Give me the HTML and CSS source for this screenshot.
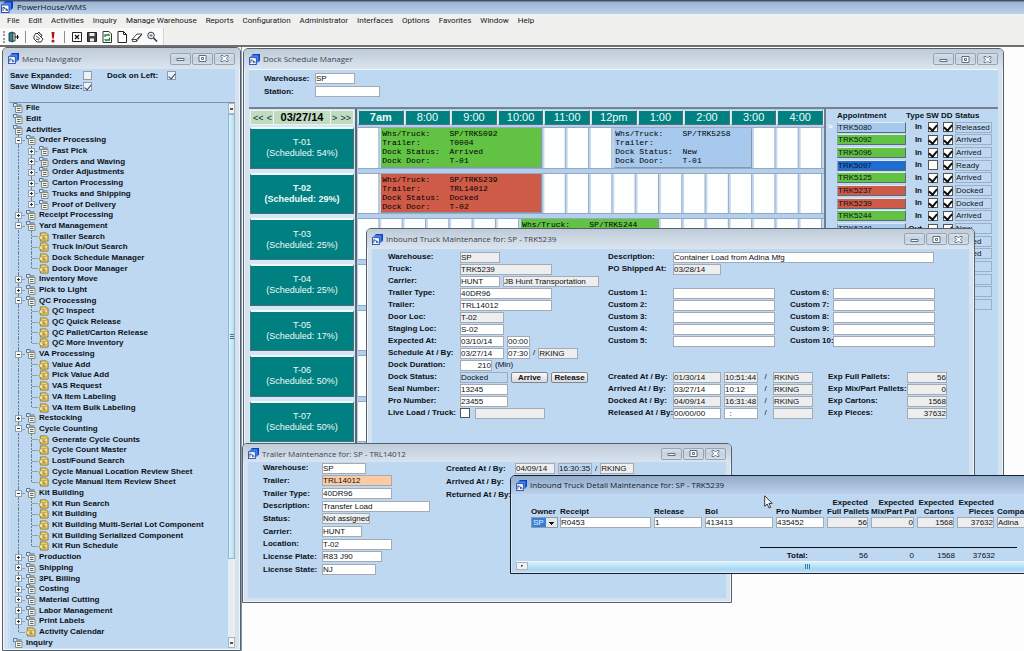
FILE: index.html
```html
<!DOCTYPE html>
<html lang="en">
<head>
<meta charset="utf-8">
<title>PowerHouse/WMS</title>
<link rel="stylesheet" href="styles.css">
</head>
<body>
<svg class="defs" aria-hidden="true">
  <symbol id="logo" viewBox="0 0 12 12"><path d="M4 0h8v7l-2 2V2H3z" fill="#0b3fc4"/><path d="M2.500 1.500h7.500v8H8V3.500H1z" fill="#3f83ee"/><path d="M0 3.500h8.500V12H0z" fill="#2450b8"/><path d="M1 4.500h6.500V11H1z" fill="#fff"/><path d="M2 6v4M2 6.500h1.500v1.500M5 7v3M5 8.500h1.500V10" stroke="#142a80" stroke-width=".8" fill="none"/></symbol>
  <symbol id="doc" viewBox="0 0 10 10"><path d="M.5.5h3.500v3H.5z" fill="#dcebfb" stroke="#56779b"/><path d="M2.500 3.500H9v6H2.500z" fill="#f6f4e6" stroke="#8a8a7c"/><path d="M4.500 2h4M4 5.500h3.500M4 7.500h3.500" stroke="#5c6a78"/></symbol>
  <symbol id="leaf" viewBox="0 0 11 10"><path d="M1.500.5H8l2 2v7H1.500z" fill="#f0d878" stroke="#8c7434"/><path d="M.5 4.500 3 3l3 .5 3.500-1V6L7 8H3L.5 7z" fill="#fbeaa0" stroke="#a88a32" stroke-width=".8"/><path d="M3 5h4M4 6.500h3" stroke="#6f5a1e" stroke-width=".8"/></symbol>
  <symbol id="min" viewBox="0 0 9 7"><path d="M1 3.500h7v2H1z" fill="#fff" stroke="#5f6b78"/></symbol>
  <symbol id="max" viewBox="0 0 9 7"><path d="M1 .5h7v6H1z" fill="#fff" stroke="#5f6b78"/><path d="M3.500 2.500h2v2h-2z" fill="#fff" stroke="#5f6b78"/></symbol>
  <symbol id="close" viewBox="0 0 9 7"><path d="M1 .5h2l1.500 1.500L6 .5h2v1L6.500 3.500 8 5.500v1H6L4.500 5 3 6.500H1v-1l1.500-2L1 1.500z" fill="#fff" stroke="#5f6b78" stroke-width=".9"/></symbol>
</svg>

<header class="app-title"><svg><use href="#logo"/></svg><h1>PowerHouse/WMS</h1></header>
<nav class="menubar">
  <a href="#">File</a><a href="#">Edit</a><a href="#">Activities</a><a href="#">Inquiry</a><a href="#">Manage Warehouse</a><a href="#">Reports</a><a href="#">Configuration</a><a href="#">Administrator</a><a href="#">Interfaces</a><a href="#">Options</a><a href="#">Favorites</a><a href="#">Window</a><a href="#">Help</a>
</nav>
<div class="toolbar"><div class="tools">
  <i class="grip"></i>
  <button aria-label="Exit"><svg viewBox="0 0 12 12"><path d="M1 2l4-1v10l-4-1z" fill="#2b8a86" stroke="#123" stroke-width=".8"/><path d="M5 2h2v8H5" fill="none" stroke="#333"/><path d="M7 6h4M9.500 4v4" stroke="#111"/></svg></button>
  <i class="sep"></i>
  <button aria-label="Pick"><svg viewBox="0 0 12 12"><path d="M2 5l2-3 1 1 2-2 1 2 2 1-1 2 2 2-2 3H5L2 8z" fill="#fff" stroke="#222" stroke-width=".9"/><path d="M4 5l4 3M6 3l3 3M4 8l3 1" stroke="#222" stroke-width=".8"/></svg></button>
  <button aria-label="Alert"><svg viewBox="0 0 12 12"><path d="M4.500 1h3L6.800 7.500H5.200z" fill="#b0121c"/><circle cx="6" cy="10" r="1.500" fill="#b0121c"/></svg></button>
  <i class="sep"></i>
  <button aria-label="Clear"><svg viewBox="0 0 12 12"><path d="M1.500 1.500h9v9h-9z" fill="#fff" stroke="#222"/><path d="M4 4l4 4M8 4L4 8" stroke="#111" stroke-width="1.200"/></svg></button>
  <button aria-label="Save"><svg viewBox="0 0 12 12"><path d="M1.500 1.500h9v9h-9z" fill="#444" stroke="#222"/><path d="M3.500 2h5v3h-5zM4 7.500h4v3H4z" fill="#eee"/></svg></button>
  <button aria-label="Refresh"><svg viewBox="0 0 12 12"><path d="M2 .5h6l2.500 2.500v8.500H2z" fill="#fff" stroke="#333"/><path d="M4 6V4h4L7 3M8.500 6.500V9H4.500l1 1" fill="none" stroke="#1c8a2c" stroke-width="1.300"/></svg></button>
  <button aria-label="New"><svg viewBox="0 0 12 12"><path d="M2 .5h5.500l3 3v8H2z" fill="#fff" stroke="#222"/><path d="M7.500.5v3h3" fill="none" stroke="#222"/></svg></button>
  <button aria-label="Erase"><svg viewBox="0 0 12 12"><path d="M1 8.500 6 3h5L7 8.500 5.500 10.500H1.500z" fill="#fff" stroke="#333" stroke-width=".9"/><path d="M1 8.500h4.500L11 3M5.500 8.500v2" fill="none" stroke="#333" stroke-width=".9"/></svg></button>
  <button aria-label="Find"><svg viewBox="0 0 12 12"><circle cx="5" cy="4.500" r="3.300" fill="#e6eef5" stroke="#444"/><path d="M3.500 4.500h3M5 3v3" stroke="#666" stroke-width=".8"/><path d="M7.500 7l3.500 3.500" stroke="#333" stroke-width="1.600"/></svg></button>
</div></div>

<main class="workspace">
<aside class="win navigator">
  <div class="bar"><svg><use href="#logo"/></svg><h2>Menu Navigator</h2><button aria-label="Minimize"><svg><use href="#min"/></svg></button><button aria-label="Maximize"><svg><use href="#max"/></svg></button><button aria-label="Close"><svg><use href="#close"/></svg></button></div>
  <div class="pane nav-pane">
    <div class="options">
      <label class="opt"><b>Save Expanded:</b><input type="checkbox"></label><label class="opt opt-b"><b>Dock on Left:</b><input type="checkbox" checked></label>
      <label class="opt"><b>Save Window Size:</b><input type="checkbox" checked></label>
    </div>
    <div class="tree-box">
    <ul class="tree">
      <li><svg><use href="#doc"/></svg>File</li>
      <li><svg><use href="#doc"/></svg>Edit</li>
      <li><svg><use href="#doc"/></svg>Activities</li>
      <li class="one"><button class="minus" aria-label="Collapse"></button><svg><use href="#doc"/></svg>Order Processing</li>
      <li class="two"><button aria-label="Expand"></button><svg><use href="#doc"/></svg>Fast Pick</li>
      <li class="two"><button aria-label="Expand"></button><svg><use href="#doc"/></svg>Orders and Waving</li>
      <li class="two"><button aria-label="Expand"></button><svg><use href="#doc"/></svg>Order Adjustments</li>
      <li class="two"><button aria-label="Expand"></button><svg><use href="#doc"/></svg>Carton Processing</li>
      <li class="two"><button aria-label="Expand"></button><svg><use href="#doc"/></svg>Trucks and Shipping</li>
      <li class="two last"><button aria-label="Expand"></button><svg><use href="#doc"/></svg>Proof of Delivery</li>
      <li class="one"><button aria-label="Expand"></button><svg><use href="#doc"/></svg>Receipt Processing</li>
      <li class="one"><button class="minus" aria-label="Collapse"></button><svg><use href="#doc"/></svg>Yard Management</li>
      <li class="two"><svg><use href="#leaf"/></svg>Trailer Search</li>
      <li class="two"><svg><use href="#leaf"/></svg>Truck In/Out Search</li>
      <li class="two"><svg><use href="#leaf"/></svg>Dock Schedule Manager</li>
      <li class="two last"><svg><use href="#leaf"/></svg>Dock Door Manager</li>
      <li class="one"><button aria-label="Expand"></button><svg><use href="#doc"/></svg>Inventory Move</li>
      <li class="one"><button aria-label="Expand"></button><svg><use href="#doc"/></svg>Pick to Light</li>
      <li class="one"><button class="minus" aria-label="Collapse"></button><svg><use href="#doc"/></svg>QC Processing</li>
      <li class="two"><svg><use href="#leaf"/></svg>QC Inspect</li>
      <li class="two"><svg><use href="#leaf"/></svg>QC Quick Release</li>
      <li class="two"><svg><use href="#leaf"/></svg>QC Pallet/Carton Release</li>
      <li class="two last"><svg><use href="#leaf"/></svg>QC More Inventory</li>
      <li class="one"><button class="minus" aria-label="Collapse"></button><svg><use href="#doc"/></svg>VA Processing</li>
      <li class="two"><svg><use href="#leaf"/></svg>Value Add</li>
      <li class="two"><svg><use href="#leaf"/></svg>Pick Value Add</li>
      <li class="two"><svg><use href="#leaf"/></svg>VAS Request</li>
      <li class="two"><svg><use href="#leaf"/></svg>VA Item Labeling</li>
      <li class="two last"><svg><use href="#leaf"/></svg>VA Item Bulk Labeling</li>
      <li class="one"><button aria-label="Expand"></button><svg><use href="#doc"/></svg>Restocking</li>
      <li class="one"><button class="minus" aria-label="Collapse"></button><svg><use href="#doc"/></svg>Cycle Counting</li>
      <li class="two"><svg><use href="#leaf"/></svg>Generate Cycle Counts</li>
      <li class="two"><svg><use href="#leaf"/></svg>Cycle Count Master</li>
      <li class="two"><svg><use href="#leaf"/></svg>Lost/Found Search</li>
      <li class="two"><svg><use href="#leaf"/></svg>Cycle Manual Location Review Sheet</li>
      <li class="two last"><svg><use href="#leaf"/></svg>Cycle Manual Item Review Sheet</li>
      <li class="one"><button class="minus" aria-label="Collapse"></button><svg><use href="#doc"/></svg>Kit Building</li>
      <li class="two"><svg><use href="#leaf"/></svg>Kit Run Search</li>
      <li class="two"><svg><use href="#leaf"/></svg>Kit Building</li>
      <li class="two"><svg><use href="#leaf"/></svg>Kit Building Multi-Serial Lot Component</li>
      <li class="two"><svg><use href="#leaf"/></svg>Kit Building Serialized Component</li>
      <li class="two last"><svg><use href="#leaf"/></svg>Kit Run Schedule</li>
      <li class="one"><button aria-label="Expand"></button><svg><use href="#doc"/></svg>Production</li>
      <li class="one"><button aria-label="Expand"></button><svg><use href="#doc"/></svg>Shipping</li>
      <li class="one"><button aria-label="Expand"></button><svg><use href="#doc"/></svg>3PL Billing</li>
      <li class="one"><button aria-label="Expand"></button><svg><use href="#doc"/></svg>Costing</li>
      <li class="one"><button aria-label="Expand"></button><svg><use href="#doc"/></svg>Material Cutting</li>
      <li class="one"><button aria-label="Expand"></button><svg><use href="#doc"/></svg>Labor Management</li>
      <li class="one"><button aria-label="Expand"></button><svg><use href="#doc"/></svg>Print Labels</li>
      <li class="one last"><svg><use href="#leaf"/></svg>Activity Calendar</li>
      <li><svg><use href="#doc"/></svg>Inquiry</li>
    </ul>
    <div class="vscroll"><button aria-label="Scroll up"></button><i class="thumb"></i><button class="down" aria-label="Scroll down"></button></div>
    </div>
  </div>
</aside>

<div class="desktop">
<section class="win dock">
  <div class="bar"><svg><use href="#logo"/></svg><h2>Dock Schedule Manager</h2><button aria-label="Minimize"><svg><use href="#min"/></svg></button><button aria-label="Maximize"><svg><use href="#max"/></svg></button><button aria-label="Close"><svg><use href="#close"/></svg></button></div>
  <div class="pane dock-pane">
    <div class="filters">
      <label class="fld"><b>Warehouse:</b><input class="w40" value="SP"></label>
      <label class="fld"><b>Station:</b><input class="w65"></label>
    </div>
    <div class="board">
      <div class="doors">
        <div class="datebar"><button>&lt;&lt;</button><button>&lt;</button><strong>03/27/14</strong><button>&gt;</button><button>&gt;&gt;</button></div>
        <div class="lanes">
          <div class="door">T-01<br>(Scheduled: 54%)</div>
          <div class="door picked">T-02<br>(Scheduled: 29%)</div>
          <div class="door">T-03<br>(Scheduled: 25%)</div>
          <div class="door">T-04<br>(Scheduled: 25%)</div>
          <div class="door">T-05<br>(Scheduled: 17%)</div>
          <div class="door">T-06<br>(Scheduled: 50%)</div>
          <div class="door">T-07<br>(Scheduled: 50%)</div>
          <div class="door"></div>
        </div>
      </div>
      <div class="times">
        <div class="hours"><strong>7am</strong><span>8:00</span><span>9:00</span><span>10:00</span><span>11:00</span><span>12pm</span><span>1:00</span><span>2:00</span><span>3:00</span><span>4:00</span></div>
        <div class="lanes">
          <div class="lane"><pre class="green" style="grid-column:2/span 7">Whs/Truck:    SP/TRK5092
Trailer:      T0004
Dock Status:  Arrived
Dock Door:    T-01</pre><pre class="new" style="grid-column:12/span 6">Whs/Truck:    SP/TRK5258
Trailer:
Dock Status:  New
Dock Door:    T-01</pre></div>
          <div class="lane"><pre class="red" style="grid-column:2/span 7">Whs/Truck:    SP/TRK5239
Trailer:      TRL14012
Dock Status:  Docked
Dock Door:    T-02</pre></div>
          <div class="lane"><pre class="green" style="grid-column:8/span 6">Whs/Truck:    SP/TRK5244</pre></div>
          <div class="lane"></div><div class="lane"></div><div class="lane"></div><div class="lane"></div><div class="lane"></div>
        </div>
      </div>
      <div class="appts">
        <table>
          <thead><tr><th class="mark"></th><th class="trk">Appointment</th><th class="ty">Type</th><th class="ck">SW</th><th class="ck">DD</th><th class="st">Status</th></tr></thead>
          <tbody>
            <tr><td class="cur">&gt;</td><td><span class="tag new">TRK5080</span></td><td>In</td><td><input type="checkbox" aria-label="SW" checked></td><td><input type="checkbox" aria-label="DD" checked></td><td><span class="stat">Released</span></td></tr>
            <tr><td></td><td><span class="tag green">TRK5092</span></td><td>In</td><td><input type="checkbox" aria-label="SW" checked></td><td><input type="checkbox" aria-label="DD" checked></td><td><span class="stat">Arrived</span></td></tr>
            <tr><td></td><td><span class="tag green">TRK5096</span></td><td>In</td><td><input type="checkbox" aria-label="SW" checked></td><td><input type="checkbox" aria-label="DD" checked></td><td><span class="stat">Arrived</span></td></tr>
            <tr><td></td><td><span class="tag blue">TRK5097</span></td><td>In</td><td><input type="checkbox" aria-label="SW"></td><td><input type="checkbox" aria-label="DD" checked></td><td><span class="stat">Ready</span></td></tr>
            <tr><td></td><td><span class="tag green">TRK5125</span></td><td>In</td><td><input type="checkbox" aria-label="SW" checked></td><td><input type="checkbox" aria-label="DD" checked></td><td><span class="stat">Arrived</span></td></tr>
            <tr><td></td><td><span class="tag red">TRK5237</span></td><td>In</td><td><input type="checkbox" aria-label="SW" checked></td><td><input type="checkbox" aria-label="DD" checked></td><td><span class="stat">Docked</span></td></tr>
            <tr><td></td><td><span class="tag red">TRK5239</span></td><td>In</td><td><input type="checkbox" aria-label="SW" checked></td><td><input type="checkbox" aria-label="DD" checked></td><td><span class="stat">Docked</span></td></tr>
            <tr><td></td><td><span class="tag green">TRK5244</span></td><td>In</td><td><input type="checkbox" aria-label="SW" checked></td><td><input type="checkbox" aria-label="DD" checked></td><td><span class="stat">Arrived</span></td></tr>
            <tr><td></td><td><span class="tag new">TRK5248</span></td><td>Out</td><td><input type="checkbox" aria-label="SW"></td><td><input type="checkbox" aria-label="DD" checked></td><td><span class="stat">New</span></td></tr>
            <tr><td></td><td></td><td></td><td></td><td></td><td><span class="stat">Arrived</span></td></tr>
            <tr><td></td><td></td><td></td><td></td><td></td><td><span class="stat">Arrived</span></td></tr>
            <tr><td></td><td></td><td></td><td></td><td></td><td><span class="stat"></span></td></tr>
            <tr><td></td><td></td><td></td><td></td><td></td><td><span class="stat"></span></td></tr>
            <tr><td></td><td></td><td></td><td></td><td></td><td><span class="stat"></span></td></tr>
            <tr><td></td><td></td><td></td><td></td><td></td><td><span class="stat"></span></td></tr>
          </tbody>
        </table>
      </div>
    </div>
  </div>
</section>

<section class="win truck">
  <div class="bar"><svg><use href="#logo"/></svg><h2>Inbound Truck Maintenance for: SP - TRK5239</h2><button aria-label="Minimize"><svg><use href="#min"/></svg></button><button aria-label="Maximize"><svg><use href="#max"/></svg></button><button aria-label="Close"><svg><use href="#close"/></svg></button></div>
  <form class="pane truck-pane">
    <div class="col-a">
      <div class="row"><label class="fld"><b>Warehouse:</b><input class="w40 ro" value="SP"></label></div>
      <div class="row"><label class="fld"><b>Truck:</b><input class="w92 ro" value="TRK5239"></label></div>
      <div class="row"><label class="fld"><b>Carrier:</b><input class="w40" value="HUNT"></label><input class="w96 ro" aria-label="Carrier name" value="JB Hunt Transportation"></div>
      <div class="row"><label class="fld"><b>Trailer Type:</b><input class="w92" value="40DR96"></label></div>
      <div class="row"><label class="fld"><b>Trailer:</b><input class="w92" value="TRL14012"></label></div>
      <div class="row"><label class="fld"><b>Door Loc:</b><input class="w44 ro" value="T-02"></label></div>
      <div class="row"><label class="fld"><b>Staging Loc:</b><input class="w44" value="S-02"></label></div>
      <div class="row"><label class="fld"><b>Expected At:</b><input class="w44" value="03/10/14"></label><input class="w23" aria-label="Expected time" value="00:00"></div>
      <div class="row"><label class="fld"><b>Schedule At / By:</b><input class="w44" value="03/27/14"></label><input class="w23" aria-label="Schedule time" value="07:30"><span>/</span><input class="w40 ro" aria-label="Scheduled by" value="RKING"></div>
      <div class="row"><label class="fld"><b>Dock Duration:</b><input class="w32 num" value="210"></label><span>(Min)</span></div>
      <div class="row"><label class="fld"><b>Dock Status:</b><input class="w48 flat" value="Docked"></label><button type="button" class="push">Arrive</button><button type="button" class="push">Release</button></div>
      <div class="row"><label class="fld"><b>Seal Number:</b><input class="w48" value="13245"></label></div>
      <div class="row"><label class="fld"><b>Pro Number:</b><input class="w48" value="23455"></label></div>
      <div class="row live"><label class="fld"><b>Live Load / Truck:</b><input type="checkbox"></label><input class="w70 ro" aria-label="Live load truck"></div>
    </div>
    <div class="col-b">
      <div class="row"><label class="fld"><b>Description:</b><input class="w261" value="Container Load from Adina Mfg"></label></div>
      <div class="row"><label class="fld"><b>PO Shipped At:</b><input class="w48 ro" value="03/28/14"></label></div>
      <div class="row"></div>
      <div class="row"><label class="fld"><b>Custom 1:</b><input class="w102"></label><label class="fld cust"><b>Custom 6:</b><input class="w102"></label></div>
      <div class="row"><label class="fld"><b>Custom 2:</b><input class="w102"></label><label class="fld cust"><b>Custom 7:</b><input class="w102"></label></div>
      <div class="row"><label class="fld"><b>Custom 3:</b><input class="w102"></label><label class="fld cust"><b>Custom 8:</b><input class="w102"></label></div>
      <div class="row"><label class="fld"><b>Custom 4:</b><input class="w102"></label><label class="fld cust"><b>Custom 9:</b><input class="w102"></label></div>
      <div class="row"><label class="fld"><b>Custom 5:</b><input class="w102"></label><label class="fld cust"><b>Custom 10:</b><input class="w102"></label></div>
      <div class="row"></div>
      <div class="row"></div>
      <div class="row"><label class="fld"><b>Created At / By:</b><input class="w48 ro" value="01/30/14"></label><input class="w34 ro" aria-label="Created time" value="10:51:44"><span class="sl">/</span><input class="w40 ro" aria-label="Created by" value="RKING"><label class="fld exp"><b>Exp Full Pallets:</b><input class="w40 ro num" value="56"></label></div>
      <div class="row"><label class="fld"><b>Arrived At / By:</b><input class="w48" value="03/27/14"></label><input class="w34" aria-label="Arrived time" value="10:12"><span class="sl">/</span><input class="w40 ro" aria-label="Arrived by" value="RKING"><label class="fld exp"><b>Exp Mix/Part Pallets:</b><input class="w40 ro num" value="0"></label></div>
      <div class="row"><label class="fld"><b>Docked At / By:</b><input class="w48 ro" value="04/09/14"></label><input class="w34 ro" aria-label="Docked time" value="16:31:48"><span class="sl">/</span><input class="w40 ro" aria-label="Docked by" value="RKING"><label class="fld exp"><b>Exp Cartons:</b><input class="w40 ro num" value="1568"></label></div>
      <div class="row"><label class="fld"><b>Released At / By:</b><input class="w48" value="00/00/00"></label><input class="w34" aria-label="Released time" value="  :"><span class="sl">/</span><input class="w40 ro" aria-label="Released by"><label class="fld exp"><b>Exp Pieces:</b><input class="w40 ro num" value="37632"></label></div>
    </div>
  </form>
</section>

<section class="win trailer">
  <div class="bar"><svg><use href="#logo"/></svg><h2>Trailer Maintenance for: SP - TRL14012</h2><button aria-label="Minimize"><svg><use href="#min"/></svg></button><button aria-label="Maximize"><svg><use href="#max"/></svg></button><button aria-label="Close"><svg><use href="#close"/></svg></button></div>
  <form class="pane trailer-pane">
    <div class="col-c">
      <label class="fld"><b>Warehouse:</b><input class="w44" value="SP"></label>
      <label class="fld"><b>Trailer:</b><input class="w70 key" value="TRL14012"></label>
      <label class="fld"><b>Trailer Type:</b><input class="w70" value="40DR96"></label>
      <label class="fld"><b>Description:</b><input class="w108" value="Transfer Load"></label>
      <label class="fld"><b>Status:</b><input class="w48 ro" value="Not assigned"></label>
      <label class="fld"><b>Carrier:</b><input class="w40" value="HUNT"></label>
      <label class="fld"><b>Location:</b><input class="w70" value="T-02"></label>
      <label class="fld"><b>License Plate:</b><input class="w60" value="R83 J90"></label>
      <label class="fld"><b>License State:</b><input class="w54" value="NJ"></label>
    </div>
    <div class="col-d">
      <div class="row"><label class="fld"><b>Created At / By:</b><input class="w40 ro" value="04/09/14"></label><input class="w34 flat" aria-label="Created time" value="16:30:35"><span>/</span><input class="w34 ro" aria-label="Created by" value="RKING"></div>
      <div class="row"><b>Arrived At / By:</b></div>
      <div class="row"><b>Returned At / By:</b></div>
    </div>
  </form>
</section>

<section class="win detail">
  <div class="bar"><svg><use href="#logo"/></svg><h2>Inbound Truck Detail Maintenance for: SP - TRK5239</h2></div>
  <div class="pane detail-pane">
    <table>
      <colgroup><col class="c-own"><col class="c-rec"><col class="c-rel"><col class="c-bol"><col class="c-pro"><col class="c-full"><col class="c-mix"><col class="c-ctn"><col class="c-pcs"><col class="c-cmp"></colgroup>
      <thead><tr><th>Owner</th><th>Receipt</th><th>Release</th><th>Bol</th><th>Pro Number</th><th class="num">Expected<br>Full Pallets</th><th class="num">Expected<br>Mix/Part Pal</th><th class="num">Expected<br>Cartons</th><th class="num">Expected<br>Pieces</th><th>Compa</th></tr></thead>
      <tbody><tr><td><select aria-label="Owner"><option>SP</option></select></td><td><input aria-label="Receipt" value="R0453"></td><td><input aria-label="Release" value="1"></td><td><input aria-label="Bol" value="413413"></td><td><input aria-label="Pro Number" value="435452"></td><td><input class="ro num" aria-label="Full pallets" value="56"></td><td><input class="ro num" aria-label="Mixed pallets" value="0"></td><td><input class="ro num" aria-label="Cartons" value="1568"></td><td><input class="ro num" aria-label="Pieces" value="37632"></td><td><input class="ro" aria-label="Company" value="Adina"></td></tr></tbody>
    </table>
    <div class="totals"><b>Total:</b><span class="t-full">56</span><span class="t-mix">0</span><span class="t-ctn">1568</span><span class="t-pcs">37632</span></div>
    <div class="hscroll"><button aria-label="Scroll left"></button><i></i></div>
  </div>
</section>
<svg class="cursor" viewBox="0 0 9 14"><path d="M.7.8v10.500l2.500-2.300 1.800 4 1.700-.8-1.800-3.800h3.300z" fill="#fff" stroke="#222" stroke-width=".9"/></svg>
</div>
</main>
</body>
</html>
```
FILE: styles.css
```css
* { box-sizing: border-box; margin: 0; padding: 0; }
body { height: 100vh; display: flex; flex-direction: column; overflow: hidden; background: #fdfdfd; font: 8px/10px "Liberation Sans", Arial, sans-serif; color: #0c1116; }
.defs { position: absolute; width: 0; height: 0; }
button, input, select { font: inherit; color: inherit; border-radius: 0; }
b, th { font-weight: bold; white-space: nowrap; }
svg { display: block; flex: none; }

.app-title { flex: none; height: 14px; display: flex; align-items: center; gap: 4px; padding-left: 1px; background: linear-gradient(#42506a 0 1px, #9cb5d3 2px, #bdd2ea); }
.app-title svg { width: 12px; height: 12px; }
.app-title h1 { font: 8px/12px "Open Sans", sans-serif; }
.menubar { flex: none; height: 14px; display: flex; align-items: center; gap: 9px; padding-left: 7px; background: #f0f0ee; font: 8px/12px Roboto, sans-serif; }
.menubar a { color: #15181c; text-decoration: none; white-space: nowrap; }
.toolbar { flex: none; height: 17px; background: #f0f0ee; }
.tools { width: 164px; height: 17px; display: flex; align-items: center; padding-left: 3px; gap: 3px; background: #fafafa; border-right: 1px solid #d4d4d4; }
.tools button { width: 12px; height: 12px; border: 0; background: none; }
.tools .grip { width: 2px; height: 12px; border-left: 2px dotted #9a9a9a; }
.tools .sep { width: 1px; height: 12px; background: #8c8c8c; margin: 0 3px 0 2px; }

.workspace { flex: 1; min-height: 0; display: flex; border-top: 2px solid #6f6f6d; }
.win { display: flex; flex-direction: column; border: 1px solid #54616e; border-radius: 5px 5px 0 0; background: #d5e2ef; box-shadow: inset 0 0 0 1px #eef4fa; }
.bar { flex: none; height: 20px; display: flex; align-items: center; padding: 0 10px 0 5px; background: linear-gradient(#bfcbd7, #dae5f0); border-radius: 4px 4px 0 0; }
.bar svg { width: 11px; height: 11px; }
.bar h2 { flex: 1; padding-left: 3px; font: 8px/12px "Open Sans", sans-serif; color: #3b444e; white-space: nowrap; }
.bar button { width: 21px; height: 12px; margin-left: 1px; display: grid; place-items: center; border: 1px solid #95a4b4; border-radius: 2px; background: linear-gradient(#d5e0ea, #c4d1de 50%, #d3dee9); }
.bar button svg { width: 9px; height: 7px; }
.pane { flex: 1; min-height: 0; margin: 0 5px 4px; background: #bfd8f2; }

.fld { display: flex; align-items: center; }
.row { display: flex; align-items: center; height: 12px; }
input { height: 11px; border: 1px solid #a3aab4; background: #fff; outline: 0; }
.ro { background: #eeeeee; }
.flat { background: #bfd8f2; }
.key { background: #fccba4; }
.num { text-align: right; }
.w23 { width: 23px; } .w32 { width: 32px; } .w34 { width: 34px; } .w40 { width: 40px; } .w44 { width: 44px; } .w48 { width: 48px; } .w54 { width: 54px; } .w60 { width: 60px; } .w65 { width: 65px; } .w70 { width: 70px; } .w92 { width: 92px; } .w96 { width: 96px; } .w102 { width: 102px; } .w108 { width: 108px; } .w261 { width: 261px; }
input[type=checkbox] { appearance: none; width: 10px; height: 10px; flex: none; display: grid; place-items: center; border: 1px solid #555; background: #fff; }
input[type=checkbox]:checked::after { content: ""; width: 4px; height: 6px; margin-bottom: 2px; border: solid #111; border-width: 0 2px 2px 0; transform: rotate(40deg); }

.navigator { flex: none; width: 239px; margin-left: 2px; }
.navigator .bar { padding: 0 5px; height: 21px; }
.nav-pane { margin-bottom: 2px; display: flex; flex-direction: column; }
.options { flex: none; display: grid; grid-template-columns: 97px 1fr; padding: 1px 2px 10px; height: 33px; }
.opt { display: flex; align-items: center; height: 11px; }
.opt b { width: 73px; }
.opt-b b { width: 60px; }
.opt input[type=checkbox] { border-color: #8d9cab; width: 9px; height: 9px; background: #eef1f4; }
.opt input[type=checkbox]:checked::after { width: 3px; height: 6px; border-width: 0 1px 1px 0; border-color: #28407c; }
.tree-box { flex: 1; min-height: 0; display: flex; margin-left: 1px; border-top: 1px solid #7f93a8; border-left: 1px solid #d3e2f2; }
.tree { flex: 1; display: grid; grid-auto-rows: 1fr; list-style: none; font-weight: bold; padding-left: 3px; }
.tree li { --g: repeating-linear-gradient(#6f7f90 0 2px, transparent 2px 3px); display: flex; align-items: center; white-space: nowrap; background-repeat: no-repeat; }
.tree svg { width: 10px; height: 10px; margin-right: 3px; }
.tree .one { padding-left: 13px; background-image: var(--g), linear-gradient(#8fa0b2, #8fa0b2); background-size: 1px 100%, 6px 1px; background-position: 5px 0, 6px 5px; }
.tree .two { padding-left: 26px; background-image: var(--g), var(--g), linear-gradient(#8fa0b2, #8fa0b2); background-size: 1px 100%, 1px 100%, 6px 1px; background-position: 5px 0, 18px 0, 19px 5px; }
.tree .two.last { background-size: 1px 100%, 1px 50%, 6px 1px; }
.tree .one.last { background-size: 1px 50%, 6px 1px; }
.tree button { width: 7px; height: 7px; margin: 0 4px 0 -11px; border: 1px solid #93a1ae; background: linear-gradient(#333, #333) center/3px 1px no-repeat, linear-gradient(#333, #333) center/1px 3px no-repeat, #fafbfc; }
.tree button.minus { background: linear-gradient(#333, #333) center/3px 1px no-repeat, #fafbfc; }
.vscroll { flex: none; width: 7px; display: flex; flex-direction: column; background: #e9edf1; }
.vscroll button { height: 11px; border: 1px solid #a9b4bf; background: linear-gradient(#555, #555) center/3px 2px no-repeat, #f2f4f6; }
.vscroll .thumb { flex: 1; border: 1px solid #8fb6cb; background: repeating-linear-gradient(#3d7796 0 1px, transparent 1px 2px) center/4px 5px no-repeat, linear-gradient(90deg, #dff3fc, #b5dff3); }
.vscroll .down { margin-top: 78px; }

.desktop { flex: 1; min-width: 0; position: relative; overflow: hidden; border-left: 1px solid #8c98a5; }
.desktop .win { position: absolute; }
.dock { left: 1px; top: 1px; width: 761px; height: 449px; }
.dock .bar, .truck .bar { padding-right: 5px; }
.dock-pane { display: flex; flex-direction: column; border-top: 1px solid #f2f7fc; }
.filters { flex: none; height: 39px; padding: 3px 0 0 15px; display: flex; flex-direction: column; gap: 2px; border-bottom: 2px solid #76828f; }
.filters b { width: 51px; }
.board { flex: 1; min-height: 0; display: flex; }
.doors { flex: none; width: 108px; display: flex; flex-direction: column; border-right: 2px solid #5d6a76; background: #d6e6f6; padding: 1px 1px 0; }
.datebar { flex: none; height: 15px; display: flex; align-items: center; background: #c0dcc0; border: 1px solid #eaf6ea; margin-bottom: 2px; }
.datebar button { flex: 1 1 9px; height: 13px; border: 0; background: none; font-size: 9px; color: #123; text-align: center; }
.datebar button:first-child, .datebar button:last-child { flex-basis: 18px; }
.datebar strong { flex: none; width: 58px; text-align: center; font-size: 11px; line-height: 13px; color: #000; border: solid #eef6ee; border-width: 0 1px; }
.lanes { flex: 1; min-height: 0; display: grid; grid-template-rows: repeat(8, 1fr); }
.door { margin: 0 0 4px; background: #008080; border: 1px solid #4c6f78; border-top: 2px solid #f0fafa; color: #eefafa; font-size: 9px; line-height: 11px; text-align: center; display: grid; place-content: center; }
.picked { font-weight: bold; }
.times { flex: 1; min-width: 0; display: flex; flex-direction: column; padding: 1px 0 0 1px; border-right: 2px solid #71808e; background: #b4cfec; }
.hours { flex: none; height: 15px; margin-bottom: 2px; display: grid; grid-template-columns: repeat(10, 1fr); background: #e4f0f4; color: #f1fbfb; font-size: 11px; line-height: 13px; text-align: center; }
.hours > * { background: #008080; border: 1px solid #567; border-color: #cfe6e8 #55727a #55727a #cfe6e8; margin-right: 1px; }
.lane { display: grid; grid-template-columns: repeat(20, 1fr); margin: 0 0 4px; min-height: 0; border: solid #93aac4; border-width: 1px 0; background: linear-gradient(90deg, #fdfefe calc(100% - 3px), #8fa9c6 calc(100% - 3px) calc(100% - 2px), #c4d9ef calc(100% - 2px)) 0 0 / 5% 100%; }
.lane pre { font: 8px/9px "Liberation Mono", "Courier New", monospace; overflow: hidden; margin-right: 2px; border: 1px solid; border-color: transparent #8797a7 #8797a7 transparent; color: #000; }
.green { background: #62c244; } .red { background: #ce5b47; } .blue { background: #206dd2; } .new { background: #a7c9ee; }
.appts { flex: none; width: 172px; padding: 2px 0 0 2px; }
.appts table { height: 200px; border-collapse: collapse; table-layout: fixed; width: 166px; }
.appts th { height: 10px; text-align: left; line-height: 8px; }
.appts .mark { width: 9px; } .appts .trk { width: 69px; } .appts .ty { width: 19px; } .appts .ck { width: 15px; } .appts .st { width: 39px; }
.appts th.ck { padding-left: 1px; }
.appts td { line-height: 10px; vertical-align: middle; }
.appts td:nth-child(3) { font-weight: bold; text-align: right; padding-right: 3px; }
.appts td:nth-child(4) input, .appts td:nth-child(5) input { margin-left: 3px; }
.cur { color: #fff; font-weight: bold; }
.tag, .stat { display: block; height: 11px; line-height: 9px; border: 1px solid; }
.tag { border-color: #dcebfa #5d6a76 #5d6a76 #8da2b6; }
.stat { border-color: #9bafc6; width: 37px; }

.truck { left: 124px; top: 181px; width: 609px; height: 260px; }
.truck-pane { display: flex; padding: 2px 0 0 16px; }
.col-a { width: 220px; }
.col-a .row, .col-b .row { gap: 3px; }
.col-a b { width: 72px; }
.col-b b { width: 65px; }
.live .w70 { margin-left: 2px; }
.cust { padding-left: 12px; }
.exp { padding-left: 12px; }
.col-b .exp b { width: 79px; }
.col-b .cust b { width: 43px; }
.sl { width: 9px; text-align: center; }
.push { height: 11px; min-width: 37px; line-height: 9px; font-weight: bold; border: 1px solid #7c8791; border-radius: 2px; background: linear-gradient(#fafafa, #d9d9d9); }

.trailer { left: 0; top: 396px; width: 490px; height: 160px; }
.trailer .bar { padding-right: 5px; height: 19px; }
.trailer-pane { display: flex; padding: 0 0 22px 15px; margin-top: -1px; }
.col-c { width: 183px; display: grid; grid-auto-rows: 1fr; }
.col-c b { width: 59px; }
.col-d { display: flex; flex-direction: column; }
.col-d .row { height: 13px; gap: 3px; }
.col-d b { width: 69px; }

.desktop .detail { left: 268px; top: 428px; width: 540px; height: 99px; border-color: #14212e; background: #bdd5ee; box-shadow: inset 0 0 0 1px #d8eaf8; }
.detail .bar { height: 18px; background: linear-gradient(#91abc9, #bbd1ea); }
.detail .bar h2 { color: #16202b; }
.detail-pane { display: flex; flex-direction: column; margin-bottom: 3px; }
.detail table { border-collapse: collapse; table-layout: fixed; width: 524px; margin-left: 15px; }
.detail th { text-align: left; vertical-align: bottom; line-height: 9px; height: 22px; padding-right: 3px; }
.detail th.num { text-align: right; }
.detail td { height: 12px; padding-right: 3px; }
.detail td input { display: block; width: 100%; }
.c-own { width: 29px; } .c-rec { width: 94px; } .c-rel { width: 51px; } .c-bol { width: 71px; } .c-pro { width: 51px; } .c-full { width: 44px; } .c-mix { width: 46px; } .c-ctn { width: 40px; } .c-pcs { width: 40px; } .c-cmp { width: 58px; }
.detail select { display: block; width: 27px; height: 11px; appearance: none; border: 1px solid #8d99a6; padding-left: 1px; color: #e4f1ff; background: linear-gradient(#111, #111) 17px 4px/5px 1px no-repeat, linear-gradient(#111, #111) 18px 5px/3px 1px no-repeat, linear-gradient(#111, #111) 19px 6px/1px 1px no-repeat, linear-gradient(#e6e6e6, #e6e6e6) 14px 0/12px 100% no-repeat, #3482d8; }
.totals { display: flex; width: 257px; margin: 19px 0 0 244px; border-top: 1px solid #0c1116; padding-top: 2px; line-height: 11px; text-align: right; }
.totals b { width: 48px; }
.t-full { width: 60px; } .t-mix { width: 46px; } .t-ctn { width: 41px; } .t-pcs { width: 40px; }
.hscroll { margin-top: auto; height: 9px; display: flex; border-top: 1px solid #e9f6fd; }
.hscroll button { width: 12px; border: 1px solid #a9b4bf; background: linear-gradient(135deg, #555 50%, transparent 50%) center/3px 3px no-repeat, #eef1f4; }
.hscroll i { flex: 1; background: repeating-linear-gradient(90deg, #2d80ad 0 1px, transparent 1px 2px) 277px 2px/6px 5px no-repeat, linear-gradient(#d9f2fd, #9dd6f2); }
.cursor { position: absolute; left: 522px; top: 448px; width: 9px; height: 14px; }
```
